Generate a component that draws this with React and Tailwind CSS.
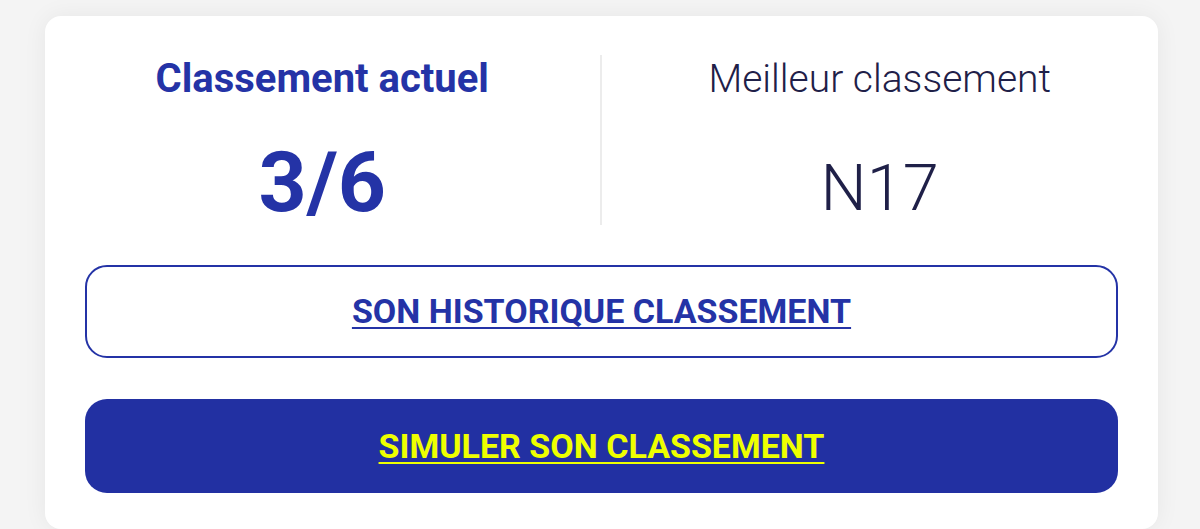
export default function App() {
  return (
    <div
      className="min-h-[529px] bg-[#f4f4f4] pt-4 overflow-hidden"
      style={{ fontFamily: "Roboto, 'Liberation Sans', sans-serif" }}
    >
      <div className="ml-[45px] w-[1113px] rounded-2xl bg-white shadow-[0_0_24px_rgba(0,0,0,0.06)] pt-[39px] pb-9">
        <div className="grid grid-cols-2 h-[170px]">
          <div className="flex flex-col items-center border-r-2 border-[#ececec]">
            <div className="text-[40px] leading-[48px] font-bold text-[#2433a6]">
              Classement actuel
            </div>
            <div className="mt-[38px] text-[84px] leading-none font-bold text-[#2433a6]">
              3/6
            </div>
          </div>
          <div className="flex flex-col items-center">
            <div className="text-[39px] leading-[48px] font-light text-[#1f2048]">
              Meilleur classement
            </div>
            <div className="mt-[53px] text-[65px] leading-none font-light text-[#1f2048]">
              N17
            </div>
          </div>
        </div>

        <div className="px-10">
          <button
            type="button"
            className="mt-10 w-full h-[93px] rounded-[22px] border-2 border-[#2433a6] bg-white flex items-center justify-center"
          >
            <span className="text-[34px] font-bold text-[#2433a6] underline decoration-2 underline-offset-[4px]">
              SON HISTORIQUE CLASSEMENT
            </span>
          </button>

          <button
            type="button"
            className="mt-[41px] w-full h-[94px] rounded-[22px] bg-[#2230a2] flex items-center justify-center"
          >
            <span className="text-[34px] font-bold text-[#eeff00] underline decoration-2 underline-offset-[4px]">
              SIMULER SON CLASSEMENT
            </span>
          </button>
        </div>
      </div>
    </div>
  );
}
